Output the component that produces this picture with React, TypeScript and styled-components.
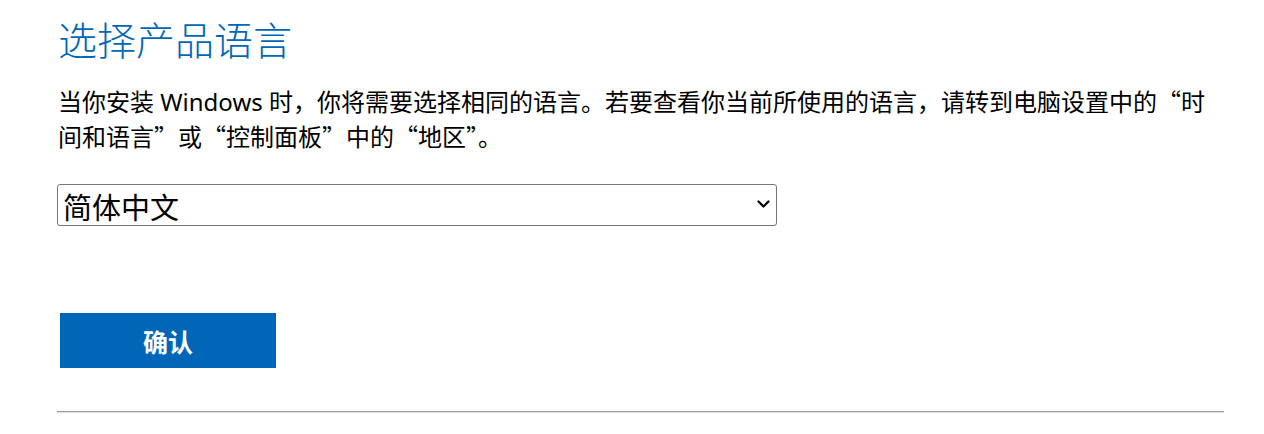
import React from "react";
import styled, { createGlobalStyle } from "styled-components";

const Global = createGlobalStyle`
  html, body { margin: 0; padding: 0; background: #fff; }
  body { font-family: "Noto Sans CJK SC", sans-serif; color: #000; }
`;

const Page = styled.div`
  width: 1166px;
  padding: 12px 0 0 58px;
`;

const Heading = styled.h2`
  margin: 0;
  font-family: "Noto Sans CJK SC", sans-serif;
  font-weight: 300;
  font-size: 39px;
  line-height: 52px;
  color: #0067b8;
`;

const Text = styled.p`
  margin: 19px 0 0;
  font-family: "Noto Sans CJK SC", sans-serif;
  font-size: 24px;
  line-height: 35px;
  color: #000;
`;

const Latin = styled.span`
  font-family: "Noto Sans", sans-serif;
  line-height: 1;
`;

const SelectWrap = styled.div`
  position: relative;
  margin-top: 31px;
  margin-left: -1px;
  width: 720px;
`;

const Select = styled.select`
  display: block;
  appearance: none;
  -webkit-appearance: none;
  width: 100%;
  height: 42px;
  font-family: "Noto Sans CJK SC", sans-serif;
  font-size: 29px;
  color: #000;
  background: #fff;
  border: 1px solid #767676;
  border-radius: 3px;
  padding: 0 40px 0 5px;
  outline: none;
`;

const Chevron = styled.svg`
  position: absolute;
  right: 7px;
  top: 16px;
  width: 13px;
  height: 9px;
  pointer-events: none;
`;

const Button = styled.button`
  display: flex;
  align-items: center;
  justify-content: center;
  margin: 87px 0 0 2px;
  width: 216px;
  height: 55px;
  border: none;
  background: #0067b8;
  color: #fff;
  font-family: "Noto Sans CJK SC", sans-serif;
  font-weight: 700;
  font-size: 25px;
  cursor: pointer;
`;

const Rule = styled.hr`
  margin: 43px 0 0 -1px;
  width: 1167px;
  border: none;
  border-top: 1px solid #999;
  border-bottom: 1px solid #e4e4e4;
  height: 0;
`;

export default function App() {
  return (
    <>
      <Global />
      <Page>
        <Heading>选择产品语言</Heading>
        <Text>
          当你安装<Latin> Windows </Latin>时，你将需要选择相同的语言。若要查看你当前所使用的语言，请转到电脑设置中的“时间和语言”或“控制面板”中的“地区”。
        </Text>
        <SelectWrap>
          <Select defaultValue="zh-cn">
            <option value="zh-cn">简体中文</option>
            <option value="en-us">English</option>
          </Select>
          <Chevron viewBox="0 0 13 9">
            <path d="M1.5 1.5 L6.5 6.5 L11.5 1.5" fill="none" stroke="#000" strokeWidth="2.2" strokeLinecap="round" strokeLinejoin="round" />
          </Chevron>
        </SelectWrap>
        <Button>确认</Button>
        <Rule />
      </Page>
    </>
  );
}
